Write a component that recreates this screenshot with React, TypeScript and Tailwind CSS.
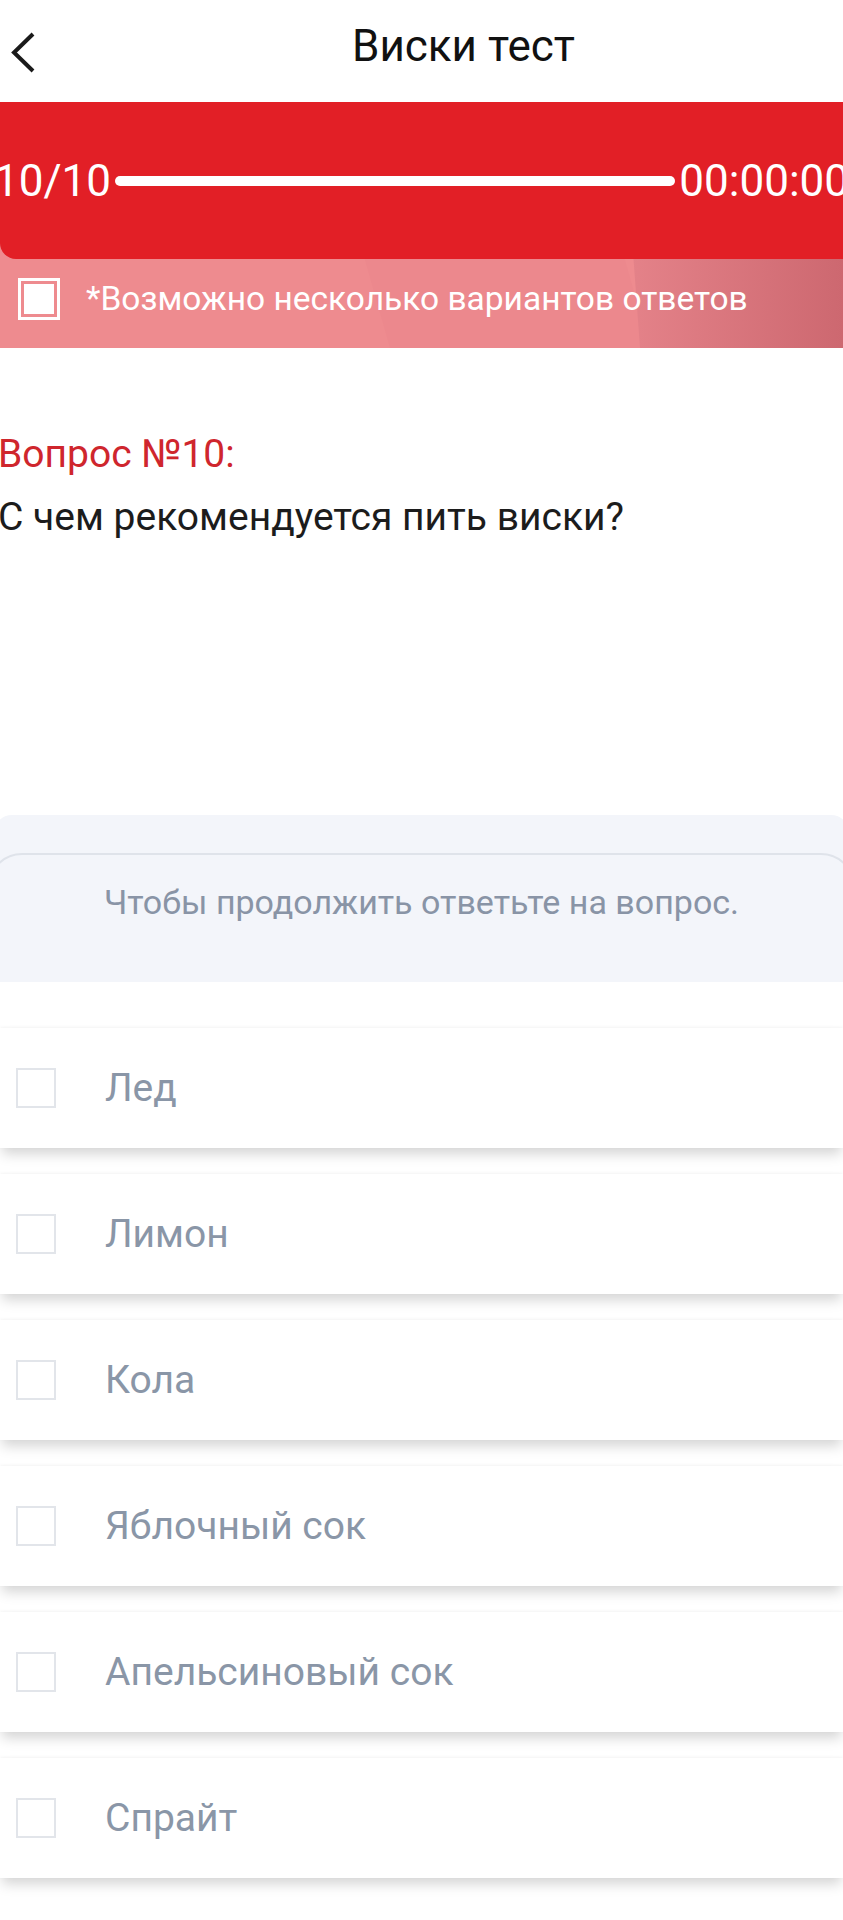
const options = ["Лед", "Лимон", "Кола", "Яблочный сок", "Апельсиновый сок", "Спрайт"];

function BannerStripes() {
  return (
    <svg
      className="absolute inset-0 h-full w-full"
      viewBox="0 0 843 89"
      preserveAspectRatio="none"
    >
      <defs>
        <linearGradient id="fade" x1="0" x2="1" y1="0" y2="0">
          <stop offset="0" stopColor="#e5838a" />
          <stop offset="1" stopColor="#cd6870" />
        </linearGradient>
      </defs>
      <rect width="843" height="89" fill="#ee8b8f" />
      <polygon points="320,0 580,0 650,89 390,89" fill="#ec888d" />
      <polygon points="622,0 843,0 843,89 640,89" fill="url(#fade)" />
      <polygon points="800,0 843,0 843,50" fill="#e38186" />
    </svg>
  );
}

export default function App() {
  return (
    <div className="min-h-[1920px] w-[843px] overflow-hidden bg-white font-['Roboto',sans-serif]">
      {/* top bar */}
      <header className="flex h-[102px] items-start">
        <div className="w-[352px] pl-[11px] pt-[32px]">
          <svg width="24" height="41" viewBox="0 0 24 41">
            <path d="M22 2 L3 20.5 L22 39" fill="none" stroke="#1a1a1a" strokeWidth="4" />
          </svg>
        </div>
        <h1 className="pt-[24px] text-[44px] leading-[44px] text-[#111111]">Виски тест</h1>
      </header>

      {/* progress + hint */}
      <div className="relative">
        <BannerStripes />
        <div className="relative flex h-[157px] items-center rounded-bl-[16px] bg-[#e21f26]">
          <div className="ml-[-6px] flex w-[855px] shrink-0 items-center gap-[4px] text-[44px] leading-[44px] text-white">
            <span>10/10</span>
            <div className="h-[10px] flex-1 rounded-full bg-white" />
            <span>00:00:00</span>
          </div>
        </div>
        <div className="relative flex h-[89px] items-center gap-[26px] pb-[10px] pl-[18px]">
          <div className="h-[42px] w-[42px] border-[3px] border-white p-[3px]">
            <div className="h-full w-full bg-white" />
          </div>
          <span className="text-[33.5px] leading-[40px] text-white">*Возможно несколько вариантов ответов</span>
        </div>
      </div>

      {/* question */}
      <div className="ml-[-2px] mt-[75px] text-[39px] leading-[63px]">
        <p className="text-[#cf262d]">Вопрос №10:</p>
        <p className="text-[#1c1c1c]">С чем рекомендуется пить виски?</p>
      </div>

      {/* notice */}
      <div className="ml-[-6px] mt-[266px] h-[167px] w-[855px] overflow-hidden rounded-t-[18px] bg-[#f3f5fa] pt-[38px]">
        <div className="ml-[-6px] h-[200px] w-[867px] rounded-[34px] border-2 border-[#dfe3ea] pt-[27px] text-center text-[34px] leading-[40px] text-[#8994a6]">
          Чтобы продолжить ответьте на вопрос.
        </div>
      </div>

      {/* answers */}
      <div className="mt-[46px] flex flex-col gap-[26px]">
        {options.map((o) => (
          <label
            key={o}
            className="flex h-[120px] items-center bg-white pl-[16px] shadow-[0_8px_12px_-2px_rgba(0,0,0,0.17),0_-1px_3px_rgba(0,0,0,0.04)]"
          >
            <span className="h-[40px] w-[40px] border-2 border-[#e2e5ea]" />
            <span className="ml-[49px] text-[39px] leading-[48px] text-[#8a96a7]">{o}</span>
          </label>
        ))}
      </div>
    </div>
  );
}
